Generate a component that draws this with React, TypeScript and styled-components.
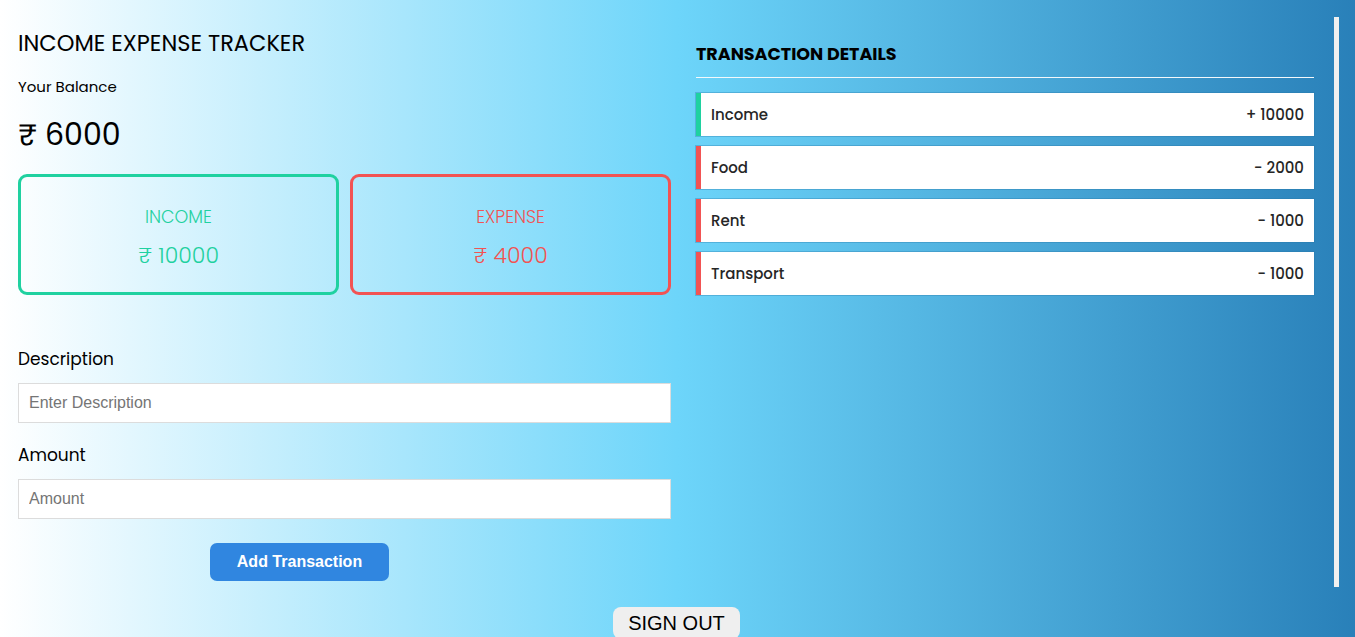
import React from "react";
import styled, { createGlobalStyle } from "styled-components";

const Global = createGlobalStyle`
  html, body { margin: 0; padding: 0; }
  body {
    font-family: "Poppins", "Inter", "Noto Sans", sans-serif;
    background: linear-gradient(to left, #2980b9, #6dd5fa, #ffffff);
    min-height: 100vh;
    overflow: hidden;
  }
  * { box-sizing: border-box; }
`;

const Page = styled.div`
  display: flex;
  flex-direction: column;
  align-items: center;
  min-height: 100vh;
`;

const Main = styled.div`
  display: flex;
  align-self: stretch;
  align-items: flex-start;
  padding: 17px 0 0 18px;
  gap: 25px;
`;

const Left = styled.section`
  width: 653px;
  display: flex;
  flex-direction: column;
`;

const Title = styled.h1`
  margin: 11px 0 0;
  font-size: 22.5px;
  font-weight: 400;
  line-height: 30px;
  color: #000;
`;

const BalanceLabel = styled.div`
  margin-top: 19px;
  font-size: 15px;
  line-height: 20px;
  color: #000;
`;

const Balance = styled.div`
  margin-top: 18px;
  font-size: 30px;
  line-height: 40px;
  color: #000;
`;

const Cards = styled.div`
  margin-top: 19px;
  display: grid;
  grid-template-columns: 1fr 1fr;
  gap: 11px;
`;

const Card = styled.div<{ $color: string }>`
  height: 121px;
  border: 3px solid ${(p) => p.$color};
  border-radius: 9px;
  color: ${(p) => p.$color};
  display: flex;
  flex-direction: column;
  align-items: center;
  padding-top: 27px;
`;

const CardLabel = styled.div`
  font-size: 17.5px;
  line-height: 26px;
  font-weight: 300;
`;

const CardAmount = styled.div`
  margin-top: 11px;
  font-size: 22px;
  line-height: 30px;
  font-weight: 300;
`;

const FieldLabel = styled.label<{ $top: number }>`
  display: block;
  margin-top: ${(p) => p.$top}px;
  font-size: 17px;
  line-height: 24px;
  color: #000;
`;

const Input = styled.input`
  margin-top: 12px;
  width: 100%;
  height: 40px;
  border: 1px solid #dcdcdc;
  background: #fff;
  padding: 0 10px;
  font-family: "Liberation Sans", Arial, sans-serif;
  font-size: 16px;
  outline: none;
  &::placeholder { color: #757575; }
`;

const AddButton = styled.button`
  margin: 24px 0 0 192px;
  width: 179px;
  height: 38px;
  border: none;
  border-radius: 7px;
  background: #3086e0;
  color: #fff;
  font-family: "Liberation Sans", Arial, sans-serif;
  font-weight: 700;
  font-size: 16px;
  cursor: pointer;
`;

const Right = styled.section`
  width: 643px;
  height: 570px;
  padding: 26px 20px 0 0;
  border-right: 5px solid #f0f0f0;
`;

const RightTitle = styled.h2`
  margin: 0;
  font-size: 17.5px;
  font-weight: 700;
  line-height: 22px;
  color: #000;
  padding-bottom: 12px;
  border-bottom: 1px solid #f3f8fb;
`;

const List = styled.ul`
  list-style: none;
  margin: 15px 0 0;
  padding: 0;
  display: flex;
  flex-direction: column;
  gap: 10px;
`;

const Item = styled.li<{ $color: string }>`
  height: 43px;
  background: #fff;
  border-left: 5px solid ${(p) => p.$color};
  box-shadow: 0 0 0 1px rgba(40, 120, 170, 0.35);
  display: flex;
  align-items: center;
  justify-content: space-between;
  padding: 0 10px;
  font-size: 15px;
  font-weight: 500;
  color: #262626;
`;

const SignOut = styled.button`
  margin-top: 20px;
  height: 32px;
  padding: 0 15px;
  border: none;
  border-radius: 8px;
  background: #efefef;
  font-family: "Liberation Sans", Arial, sans-serif;
  font-size: 20px;
  line-height: 28px;
  color: #000;
  transform: translateX(-1px);
`;

const GREEN = "#1fd1a0";
const RED = "#f25353";

const transactions = [
  { name: "Income", amount: "+ 10000", color: GREEN },
  { name: "Food", amount: "- 2000", color: RED },
  { name: "Rent", amount: "- 1000", color: RED },
  { name: "Transport", amount: "- 1000", color: RED },
];

export default function App() {
  return (
    <Page>
      <Global />
      <Main>
        <Left>
          <Title>INCOME EXPENSE TRACKER</Title>
          <BalanceLabel>Your Balance</BalanceLabel>
          <Balance>₹ 6000</Balance>
          <Cards>
            <Card $color={GREEN}>
              <CardLabel>INCOME</CardLabel>
              <CardAmount>₹ 10000</CardAmount>
            </Card>
            <Card $color={RED}>
              <CardLabel>EXPENSE</CardLabel>
              <CardAmount>₹ 4000</CardAmount>
            </Card>
          </Cards>
          <FieldLabel $top={52}>Description</FieldLabel>
          <Input placeholder="Enter Description" />
          <FieldLabel $top={20}>Amount</FieldLabel>
          <Input placeholder="Amount" />
          <AddButton>Add Transaction</AddButton>
        </Left>
        <Right>
          <RightTitle>TRANSACTION DETAILS</RightTitle>
          <List>
            {transactions.map((t) => (
              <Item key={t.name} $color={t.color}>
                <span>{t.name}</span>
                <span>{t.amount}</span>
              </Item>
            ))}
          </List>
        </Right>
      </Main>
      <SignOut>SIGN OUT</SignOut>
    </Page>
  );
}
